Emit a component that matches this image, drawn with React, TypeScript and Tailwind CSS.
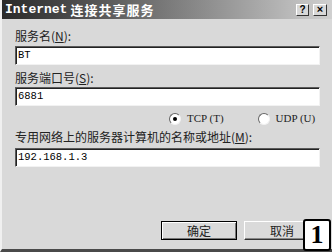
const cjk = "font-['SimSun','Noto_Sans_CJK_SC',sans-serif]";

function Field({ value }: { value: string }) {
  return (
    <div className="h-[19px] w-full bg-white border border-t-[#5a5a5a] border-l-[#5a5a5a] border-b-[#f2f2f2] border-r-[#f2f2f2] shadow-[inset_1px_1px_0_#222] flex items-center pl-[2px]">
      <span className="font-['Liberation_Mono',monospace] text-[10.5px] text-black leading-none">{value}</span>
    </div>
  );
}

function Radio({ checked, label }: { checked?: boolean; label: string }) {
  return (
    <div className="flex items-center gap-[6px]">
      <span className="w-[12px] h-[12px] rounded-full bg-white border border-t-[#666] border-l-[#666] border-b-[#f2f2f2] border-r-[#f2f2f2] flex items-center justify-center">
        {checked && <span className="w-[4px] h-[4px] rounded-full bg-black" />}
      </span>
      <span className="font-['Liberation_Serif',serif] text-[11px] text-[#222]">{label}</span>
    </div>
  );
}

function Button({ label, primary }: { label: string; primary?: boolean }) {
  return (
    <div
      className={`h-[19px] w-[76px] bg-[#dadada] flex items-center justify-center ${
        primary
          ? "border border-black shadow-[inset_1px_1px_0_#fff,inset_-1px_-1px_0_#777]"
          : "border border-t-white border-l-white border-b-[#333] border-r-[#333] shadow-[inset_-1px_-1px_0_#888]"
      }`}
    >
      <span className={`${cjk} text-[12px] text-[#222]`}>{label}</span>
    </div>
  );
}

export default function App() {
  return (
    <div className="relative w-[332px] h-[252px] bg-[#d9d9d9] overflow-hidden">
      <div className="flex flex-col h-full border-l-2 border-l-[#f0f0f0] border-b-[3px] border-b-[#4a4a4a]">
        {/* title bar */}
        <div className="h-[19px] shrink-0 flex items-center justify-between pl-[3px] pr-[5px] bg-gradient-to-r from-[#2a2a2a] via-[#7a7a7a] to-[#d0d0d0]">
          <div className="flex items-center gap-[3px] text-white">
            <span className="font-['Liberation_Mono',monospace] font-bold text-[13px]">Internet</span>
            <span className={`${cjk} font-bold text-[13px] tracking-[1px]`}>连接共享服务</span>
          </div>
          <div className="flex gap-[4px]">
            <div className="w-[13px] h-[12px] bg-[#d8d8d8] border border-t-white border-l-white border-b-[#333] border-r-[#333] flex items-center justify-center text-[10px] font-bold leading-none font-['Liberation_Sans',sans-serif]">?</div>
            <div className="w-[14px] h-[12px] bg-[#d8d8d8] border border-t-white border-l-white border-b-[#333] border-r-[#333] flex items-center justify-center text-[11px] font-bold leading-none font-['Liberation_Sans',sans-serif]">×</div>
          </div>
        </div>

        {/* body */}
        <div className="flex-1 flex flex-col pl-[13px] pr-[12px]">
          <div className={`${cjk} text-[12px] text-[#222] mt-[10px] h-[14px] leading-[14px]`}>服务名(<span className="underline">N</span>):</div>
          <div className="mt-[3px]"><Field value="BT" /></div>

          <div className={`${cjk} text-[12px] text-[#222] mt-[6px] h-[14px] leading-[14px]`}>服务端口号(<span className="underline">S</span>):</div>
          <div className="mt-[2px]"><Field value="6881" /></div>

          <div className="flex h-[15px] gap-[34px] pl-[154px] mt-[5px]">
            <Radio checked label="TCP (T)" />
            <Radio label="UDP (U)" />
          </div>

          <div className={`${cjk} text-[12px] text-[#222] mt-[4px] h-[14px] leading-[14px]`}>专用网络上的服务器计算机的名称或地址(<span className="underline">M</span>):</div>
          <div className="mt-[4px]"><Field value="192.168.1.3" /></div>

          <div className="flex justify-end gap-[7px] mt-[54px]">
            <Button primary label="确定" />
            <Button label="取消" />
          </div>
        </div>
      </div>

      {/* figure marker */}
      <div className="absolute right-[1px] bottom-[1px] w-[28px] h-[32px] bg-white border-2 border-black rounded-[3px] flex items-center justify-center">
        <span className="font-['Liberation_Serif',serif] font-bold text-[26px] leading-none text-black">1</span>
      </div>
    </div>
  );
}
